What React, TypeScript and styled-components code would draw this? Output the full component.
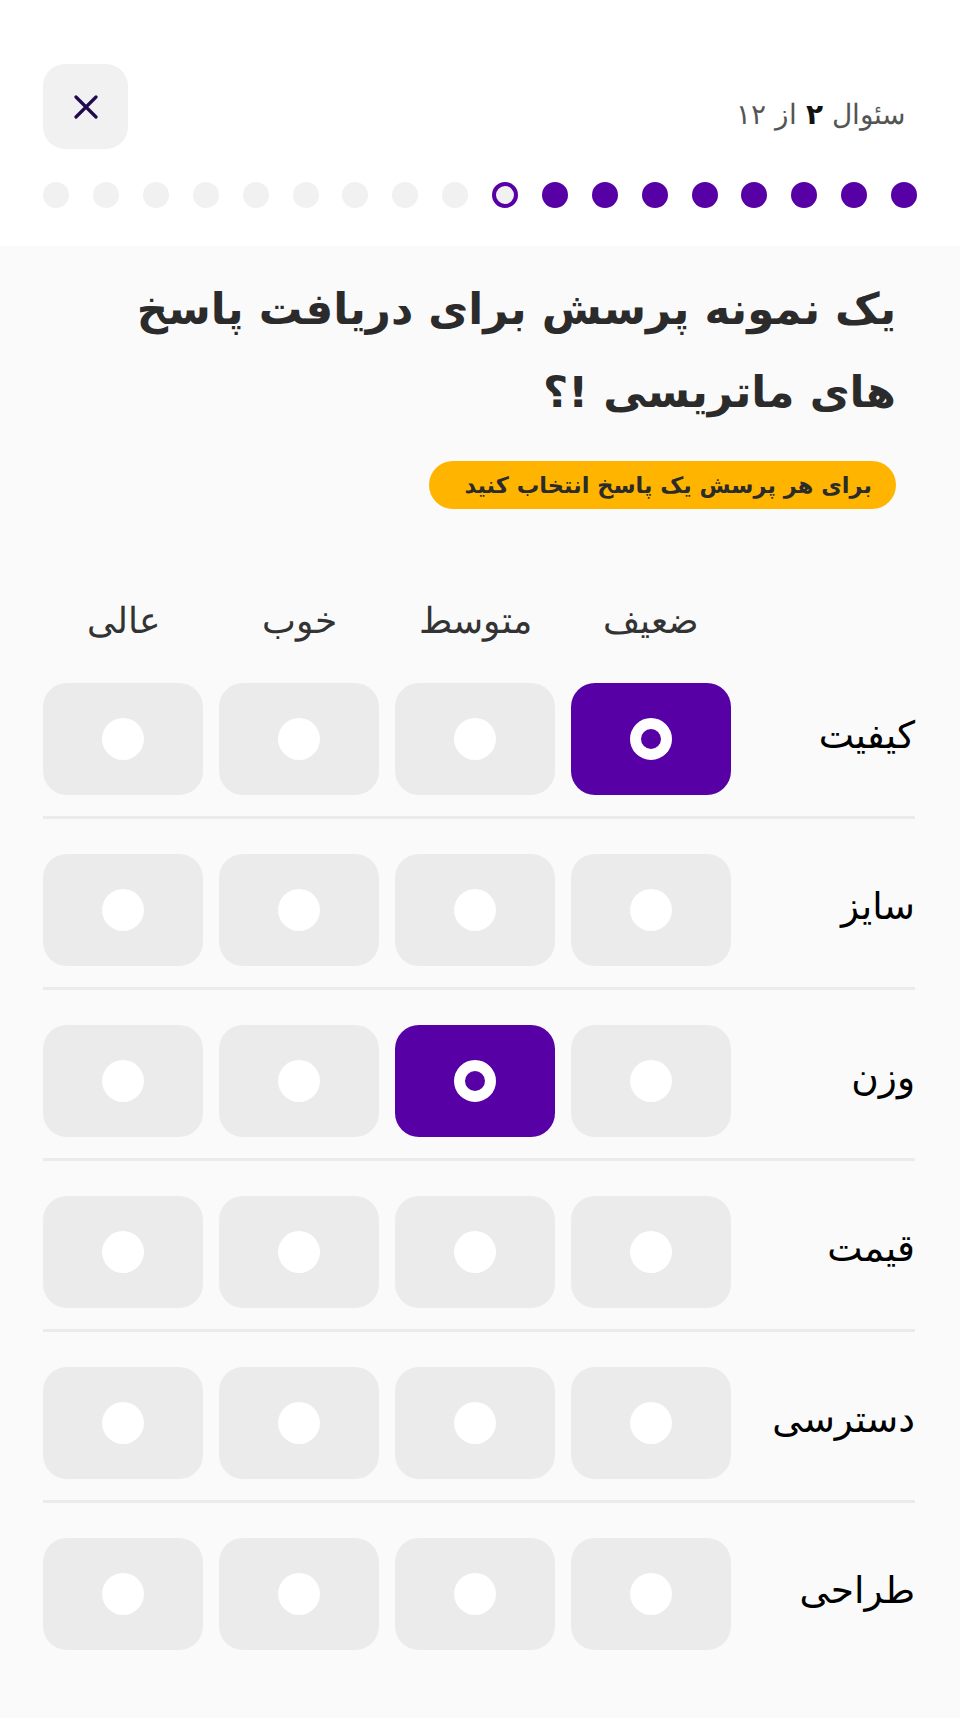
import React from "react";
import styled, { createGlobalStyle } from "styled-components";

const GlobalStyle = createGlobalStyle`
  html, body {
    margin: 0;
    padding: 0;
    background: #fafafa;
  }
  body {
    font-family: "DejaVu Sans", "Noto Sans", sans-serif;
  }
  * { box-sizing: border-box; }
`;

const PURPLE = "#5600a6";

const Page = styled.div`
  direction: rtl;
  width: 960px;
  min-height: 1718px;
  background: #fafafa;
`;

const Header = styled.header`
  background: #ffffff;
  padding: 64px 43px 38px 43px;
  display: flex;
  flex-direction: column;
  gap: 33px;
`;

const TopBar = styled.div`
  display: flex;
  align-items: center;
  justify-content: space-between;
  padding-right: 12px;
`;

const Counter = styled.div`
  font-family: "DejaVu Sans", sans-serif;
  font-weight: 300;
  font-size: 28px;
  color: #555555;
  padding-top: 16px;
  b {
    color: #111;
    font-weight: 700;
  }
`;

const CloseButton = styled.button`
  width: 85px;
  height: 85px;
  border: none;
  border-radius: 22px;
  background: #f1f1f1;
  display: flex;
  align-items: center;
  justify-content: center;
  padding: 0;
  cursor: pointer;
`;

const Dots = styled.div`
  display: flex;
  justify-content: space-between;
  align-items: center;
`;

const Dot = styled.span<{ $state: "done" | "current" | "todo" }>`
  width: 26px;
  height: 26px;
  border-radius: 50%;
  background: ${(p) => (p.$state === "done" ? PURPLE : "#f1f1f1")};
  border: ${(p) => (p.$state === "current" ? `4px solid ${PURPLE}` : "none")};
`;

const Main = styled.main`
  padding: 22px 45px 60px 43px;
`;

const Title = styled.h1`
  margin: 0 19px 0 0;
  font-family: "DejaVu Sans", sans-serif;
  font-weight: 700;
  font-size: 43.5px;
  line-height: 83px;
  color: #2b2b2b;
`;

const Badge = styled.div`
  display: flex;
  justify-content: flex-start;
  margin: 27px 19px 0 0;
`;

const BadgeText = styled.span`
  display: inline-block;
  height: 48px;
  line-height: 48px;
  width: 467px;
  padding: 0 24px;
  border-radius: 24px;
  background: #ffb400;
  color: #2b2b2b;
  font-weight: 700;
  font-size: 22.5px;
  white-space: nowrap;
`;

const Matrix = styled.div`
  margin-top: 92px;
  display: flex;
  flex-direction: column;
`;

const HeadRow = styled.div`
  display: flex;
  align-items: center;
  height: 40px;
  margin-bottom: 42px;
`;

const LabelSpace = styled.div`
  flex: 1;
`;

const Cells = styled.div`
  display: grid;
  grid-template-columns: repeat(4, 160px);
  gap: 16px;
`;

const ColHead = styled.div`
  text-align: center;
  font-size: 36px;
  line-height: 40px;
  color: #333333;
  font-weight: 300;
`;

const Row = styled.div<{ $last?: boolean }>`
  display: flex;
  align-items: center;
  padding-bottom: ${(p) => (p.$last ? "0" : "21px")};
  margin-bottom: ${(p) => (p.$last ? "0" : "35px")};
  border-bottom: ${(p) => (p.$last ? "none" : "3px solid #ebebeb")};
`;

const RowLabel = styled.div`
  flex: 1;
  font-size: 37.5px;
  line-height: 44px;
  padding-bottom: 8px;
  color: #000;
`;

const Cell = styled.button<{ $selected?: boolean }>`
  height: 112px;
  border: none;
  border-radius: 24px;
  background: ${(p) => (p.$selected ? PURPLE : "#ebebeb")};
  display: flex;
  align-items: center;
  justify-content: center;
  padding: 0;
  cursor: pointer;
`;

const Knob = styled.span<{ $selected?: boolean }>`
  width: 42px;
  height: 42px;
  border-radius: 50%;
  background: ${(p) => (p.$selected ? PURPLE : "#ffffff")};
  border: ${(p) => (p.$selected ? "11px solid #ffffff" : "none")};
`;

const columns = ["ضعیف", "متوسط", "خوب", "عالی"];
const rows: { label: string; selected: number | null }[] = [
  { label: "کیفیت", selected: 0 },
  { label: "سایز", selected: null },
  { label: "وزن", selected: 1 },
  { label: "قیمت", selected: null },
  { label: "دسترسی", selected: null },
  { label: "طراحی", selected: null },
];

const dotStates: ("done" | "current" | "todo")[] = Array.from({ length: 18 }, (_, i) =>
  i < 8 ? "done" : i === 8 ? "current" : "todo"
);

export default function App() {
  return (
    <Page>
      <GlobalStyle />
      <Header>
        <TopBar>
          <Counter>
            سئوال <b>۲</b> از ۱۲
          </Counter>
          <CloseButton aria-label="بستن">
            <svg width="24" height="24" viewBox="0 0 24 24">
              <path
                d="M2 2 L22 22 M22 2 L2 22"
                stroke="#1f0a4d"
                strokeWidth="3.2"
                strokeLinecap="round"
                fill="none"
              />
            </svg>
          </CloseButton>
        </TopBar>
        <Dots>
          {dotStates.map((s, i) => (
            <Dot key={i} $state={s} />
          ))}
        </Dots>
      </Header>
      <Main>
        <Title>یک نمونه پرسش برای دریافت پاسخ های ماتریسی !؟</Title>
        <Badge>
          <BadgeText>برای هر پرسش یک پاسخ انتخاب کنید</BadgeText>
        </Badge>
        <Matrix>
          <HeadRow>
            <LabelSpace />
            <Cells>
              {columns.map((c) => (
                <ColHead key={c}>{c}</ColHead>
              ))}
            </Cells>
          </HeadRow>
          {rows.map((r, ri) => (
            <Row key={r.label} $last={ri === rows.length - 1}>
              <RowLabel>{r.label}</RowLabel>
              <Cells>
                {columns.map((c, ci) => (
                  <Cell key={c} $selected={r.selected === ci} aria-label={`${r.label} ${c}`}>
                    <Knob $selected={r.selected === ci} />
                  </Cell>
                ))}
              </Cells>
            </Row>
          ))}
        </Matrix>
      </Main>
    </Page>
  );
}
